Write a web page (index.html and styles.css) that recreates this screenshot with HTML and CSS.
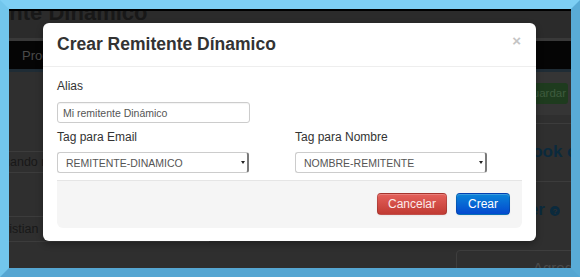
FILE: index.html
```html
<!DOCTYPE html>
<html lang="es">
<head>
<meta charset="utf-8">
<title>Crear Remitente Dínamico</title>
<link rel="stylesheet" href="styles.css">
</head>
<body>
<div class="frame">
  <div class="page">
    <div class="topbar"></div>
    <div class="hero"><h1 class="hero-title">Remitente Dinámico</h1></div>
    <div class="hero-sep"></div>
    <nav class="navbar"><span class="nav-item">Programación</span></nav>
    <div class="nav-line"></div>
    <div class="content">
      <div class="left-col">
        <div class="row row-a"><span class="row-text row-text-a">Cuando remitente</span></div>
        <div class="row row-b"><span class="row-text row-text-b">Cristian</span></div>
      </div>
      <div class="right-col">
        <div class="toolbar"><span class="btn-save">Guardar</span></div>
        <div class="rule"></div>
        <h2 class="side-head side-head-a">Facebook connect</h2>
        <div class="rule rule-b"></div>
        <h2 class="side-head side-head-b">Newsletter <svg class="help" width="10" height="10" viewBox="0 0 10 10"><circle cx="5" cy="5" r="5" fill="#0b2a3d"/><text x="5" y="8.2" text-anchor="middle" font-family="Liberation Sans, Arial, sans-serif" font-weight="bold" font-size="8" fill="#2f2f2f">?</text></svg></h2>
        <div class="add-box"><span class="add-text">Agregar</span></div>
      </div>
    </div>

    <div class="modal">
      <div class="modal-header">
        <h3 class="modal-title">Crear Remitente Dínamico</h3>
        <span class="close">×</span>
      </div>
      <div class="modal-body">
        <div class="field">
          <label class="label">Alias</label>
          <div class="input">Mi remitente Dinámico</div>
        </div>
        <div class="field-grid">
          <div class="field">
            <label class="label">Tag para Email</label>
            <div class="select"><span>REMITENTE-DINAMICO</span><span class="caret"></span></div>
          </div>
          <div class="field">
            <label class="label">Tag para Nombre</label>
            <div class="select"><span>NOMBRE-REMITENTE</span><span class="caret"></span></div>
          </div>
        </div>
        <div class="form-actions">
          <span class="btn btn-danger">Cancelar</span>
          <span class="btn btn-primary">Crear</span>
        </div>
      </div>
    </div>
  </div>
</div>
</body>
</html>
```

FILE: styles.css
```css
* { box-sizing: border-box; }
html, body { margin: 0; padding: 0; }
body {
  width: 580px;
  height: 277px;
  font-family: "Liberation Sans", Arial, sans-serif;
  overflow: hidden;
  background: #5aabd6;
}
.frame {
  width: 580px;
  height: 277px;
  border: 9px solid;
  border-color: #7ecff4 #59abd6 #55a6d2 #72c6ec;
}
.page {
  position: relative;
  width: 562px;
  height: 259px;
  overflow: hidden;
  background: #2f2f2f;
}
.topbar { height: 2px; background: #000; }
.hero {
  height: 27px;
  overflow: hidden;
  background: #2b2b2b;
}
.hero-title {
  margin: -9px 0 0 -73px;
  font-size: 22px;
  line-height: 22px;
  font-weight: bold;
  color: #181818;
  white-space: nowrap;
}
.hero-sep { height: 3px; background: #393939; }
.navbar {
  height: 28px;
  background: #050505;
  padding-left: 13px;
  display: flex;
  align-items: center;
}
.nav-item { font-size: 13px; color: #4a4a4a; }
.nav-line { height: 3px; background: #1f2c35; }

.content {
  display: flex;
  justify-content: space-between;
  height: 196px;
}
.left-col { width: 200px; padding-top: 79px; }
.row {
  border-top: 1px solid #3c3c3c;
  border-bottom: 1px solid #3c3c3c;
  display: flex;
  align-items: center;
  overflow: hidden;
}
.row-a { height: 22px; }
.row-b { height: 26px; margin-top: 43px; }
.row-text {
  font-size: 12.5px;
  color: #181818;
  white-space: nowrap;
}
.row-text-a { margin-left: -15px; }
.row-text-b { margin-left: -13px; }

.right-col { width: 115px; }
.toolbar {
  height: 43px;
  background: #353535;
  padding-top: 11px;
  padding-left: 61px;
}
.btn-save {
  display: block;
  width: 51px;
  height: 21px;
  background: #1e3b1e;
  border-radius: 3px;
  color: #3e5c3e;
  font-size: 11.5px;
  line-height: 21px;
  text-align: right;
  padding-right: 2px;
  white-space: nowrap;
  overflow: hidden;
}
.rule { height: 1px; background: #3c3c3c; margin-top: 8px; }
.side-head {
  margin: 0;
  font-size: 17px;
  line-height: 20px;
  font-weight: bold;
  color: #0b2a3d;
  white-space: nowrap;
  display: flex;
  align-items: center;
}
.side-head-a { margin-top: 18px; padding-left: 27px; }
.rule-b { margin-top: 19px; }
.side-head-b { margin-top: 18px; padding-left: 3px; }
.help { margin-left: 5px; margin-top: 1px; }
.add-box {
  margin-top: 30px;
  height: 30px;
  margin-right: -10px;
  border: 1px solid #3e3e3e;
  border-radius: 4px;
  padding: 8px 0 0 76px;
}
.add-text { font-size: 15px; color: #4a4a4a; white-space: nowrap; }

/* modal */
.modal {
  position: absolute;
  left: 34px;
  top: 14px;
  width: 493px;
  background: #fff;
  border-radius: 6px;
  box-shadow: 0 3px 7px rgba(0,0,0,0.3);
}
.modal-header {
  display: flex;
  justify-content: space-between;
  align-items: flex-start;
  padding: 11px 14px 12px 14px;
  border-bottom: 1px solid #eeeeee;
}
.modal-title {
  margin: 0;
  font-size: 17.5px;
  line-height: 20px;
  font-weight: bold;
  color: #333;
}
.close {
  font-size: 15px;
  line-height: 20px;
  font-weight: bold;
  color: #c4c4c4;
  margin-right: 1px;
  margin-top: -3px;
}
.modal-body { padding: 9px 14px 13px 14px; }
.field { display: flex; flex-direction: column; align-items: flex-start; }
.label {
  font-size: 12px;
  line-height: 20px;
  color: #333;
}
.input {
  margin-top: 6px;
  width: 193px;
  height: 21px;
  border: 1px solid #cccccc;
  border-radius: 3px;
  padding: 0 5px;
  font-size: 10.5px;
  color: #555;
  display: flex;
  align-items: center;
  box-shadow: inset 0 1px 1px rgba(0,0,0,0.05);
}
.field-grid {
  margin-top: 4px;
  display: grid;
  grid-template-columns: 238px 1fr;
}
.select {
  margin-top: 5px;
  width: 192px;
  height: 21px;
  border: 1px solid #cccccc;
  border-right: 2px solid #7a7a7a;
  border-radius: 3px;
  padding: 0 0 0 8px;
  font-size: 10.5px;
  color: #555;
  display: flex;
  align-items: center;
  justify-content: space-between;
}
.caret {
  width: 0;
  height: 0;
  border-left: 2.5px solid transparent;
  border-right: 2.5px solid transparent;
  border-top: 3px solid #222;
  margin-right: 2px;
}
.form-actions {
  margin-top: 7px;
  height: 48px;
  background: #f5f5f5;
  border-top: 1px solid #e5e5e5;
  border-radius: 0 0 6px 6px;
  display: flex;
  justify-content: flex-end;
  align-items: flex-start;
  gap: 9px;
  padding: 12px 12px 0 0;
}
.btn {
  height: 22px;
  border-radius: 4px;
  font-size: 12px;
  line-height: 20px;
  color: #fff;
  text-align: center;
  border: 1px solid rgba(0,0,0,0.15);
  box-shadow: inset 0 1px 0 rgba(255,255,255,0.2), 0 1px 2px rgba(0,0,0,0.05);
}
.btn-danger {
  width: 70px;
  background: linear-gradient(#e4605a, #c13b33);
  color: #fbeaea;
}
.btn-primary {
  width: 54px;
  background: linear-gradient(#0a84d8, #0449cf);
}
```
